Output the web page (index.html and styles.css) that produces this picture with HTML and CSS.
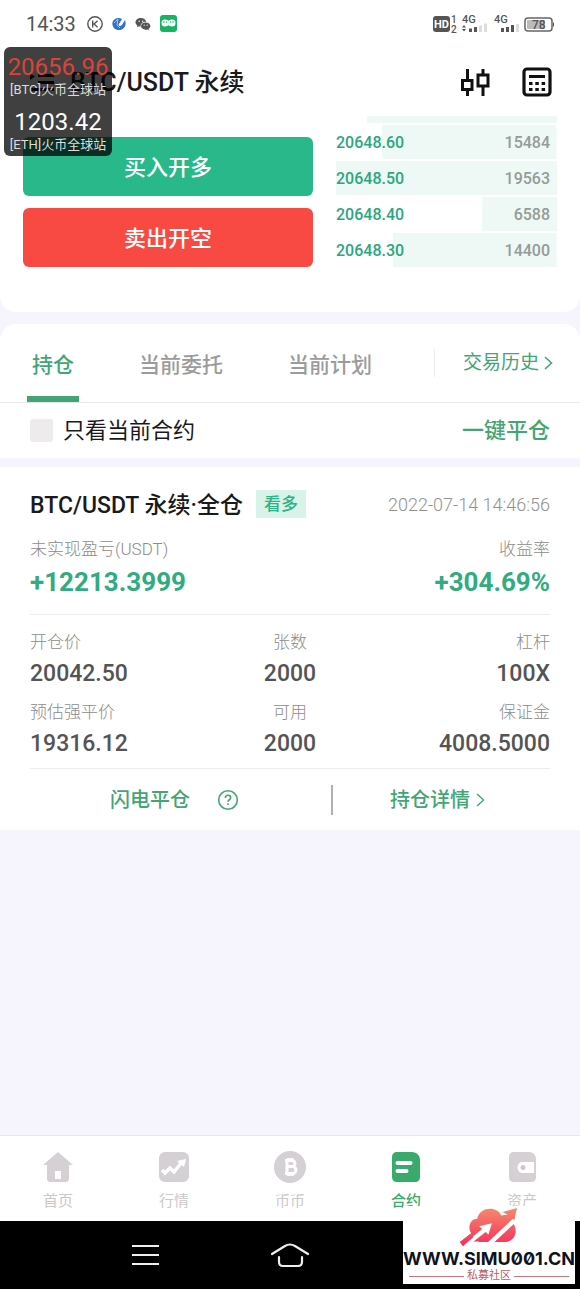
FILE: index.html
```html
<!DOCTYPE html>
<html lang="zh-CN">
<head>
<meta charset="utf-8">
<meta name="viewport" content="width=device-width, initial-scale=1">
<title>BTC/USDT 永续</title>
<link rel="stylesheet" href="styles.css">
</head>
<body>
<div class="statusbar">
  <span class="clock">14:33</span>
  <svg class="status-icon" width="16" height="16" viewBox="0 0 16 16" fill="none" stroke="#555" stroke-width="1.4"><circle cx="8" cy="8" r="7.2"/><path d="M5.7 4.5v7M10.6 4.8 7 8l3.6 3.2"/></svg>
  <svg class="status-icon" width="14" height="14" viewBox="0 0 14 14"><path d="M1 4c2-3 6-4 9-2L7 7c-1 2 1 3 3 1l3-5c2 5-1 10-6 10S-1 8 1 4z" fill="#2f6fd0"/><path d="M2 6l4-4-1 6 3 3" stroke="#9cc4f4" fill="none"/></svg>
  <svg class="status-icon" width="16" height="14" viewBox="0 0 16 14" fill="#555"><path d="M6 1C2.700 1 .5 3 .5 5.300c0 1.300.7 2.400 1.800 3.200L2 10.200l1.900-1c.6.2 1.200.3 1.800.3C5.300 6.500 8 4.600 11.200 4.700 10.700 2.500 8.600 1 6 1z"/><path d="M10.700 5.400c-2.700 0-4.700 1.700-4.700 3.700s2 3.600 4.700 3.600c.6 0 1.100-.1 1.600-.2l1.600.9-.4-1.500c1.200-.7 1.900-1.700 1.900-2.800 0-2-2-3.700-4.700-3.700z"/><g fill="#fff"><circle cx="4.200" cy="4.200" r=".7"/><circle cx="7.700" cy="4.200" r=".7"/><circle cx="9.200" cy="8.200" r=".6"/><circle cx="12.200" cy="8.200" r=".6"/></g></svg>
  <svg class="status-icon" width="17" height="17" viewBox="0 0 17 17"><rect width="17" height="17" rx="3" fill="#16b364"/><path d="M5 4.500c1.500 0 2.500.7 3.500 1.200 1-.5 2-1.200 3.500-1.200a3.500 3.500 0 0 1 0 7c-1.500 0-2.500-.7-3.500-1.200-1 .5-2 1.200-3.500 1.200a3.500 3.500 0 0 1 0-7z" fill="#fff"/><g fill="#16b364"><circle cx="4" cy="7" r=".8"/><circle cx="6.500" cy="7" r=".8"/><circle cx="10.500" cy="7" r=".8"/><circle cx="13" cy="7" r=".8"/></g></svg>
  <svg class="status-right" width="121" height="20" viewBox="0 0 121 20" font-family="Roboto, sans-serif" fill="#555">
    <rect x="0" y="2" width="17" height="16" rx="3"/>
    <text x="1" y="14" font-size="11" font-weight="700" fill="#fff">HD</text>
    <text x="18" y="9" font-size="10" font-weight="500">1</text>
    <text x="18" y="19" font-size="10" font-weight="500">2</text>
    <text x="29" y="9" font-size="11" font-weight="500">4G</text>
    <path d="M29 13.500l2-2.500 2 2.500zM29 15l2 2.500 2-2.500z"/>
    <path d="M36 14.500h3V18h-3zM41 13h3v5h-3z"/>
    <path d="M46 11.500h3V18h-3zM51 9.500h3V18h-3z" fill="#ddd"/>
    <text x="61" y="9" font-size="11" font-weight="500">4G</text>
    <path d="M68 14h3v4h-3zM73 13h3v5h-3zM78 11h3v7h-3z"/>
    <path d="M83 10h3v8h-3z" fill="#ddd"/>
    <rect x="92" y="4" width="27" height="13" rx="3" fill="#fff" stroke="#666" stroke-width="1.500"/>
    <rect x="94" y="6" width="18" height="9" rx="1" fill="#bbb"/>
    <path d="M120 8.500h1v4h-1z"/>
    <text x="99" y="15" font-size="12" font-weight="500">78</text>
  </svg>
</div>

<section class="trade">
  <header class="header">
    <button class="icon-btn" aria-label="菜单"><svg width="24" height="20" viewBox="0 0 24 20" fill="#111"><path d="M0 1l5 3.500L0 8zM8 2h16v3H8zM8 9h16v3H8zM0 16h24v3H0z"/></svg></button>
    <h1 class="title">BTC/USDT 永续</h1>
    <button class="icon-btn" aria-label="K线"><svg width="30" height="30" viewBox="0 0 30 30" fill="none" stroke="#111" stroke-width="3"><path d="M7.500 2v11M7.500 23v6M2.500 13.500h9.500v9H2.500zM23 2v5M23 19v10M18 8h10v11H18z"/></svg></button>
    <button class="icon-btn" aria-label="计算器"><svg width="30" height="30" viewBox="0 0 30 30"><rect x="2" y="2" width="26" height="26" rx="3" fill="none" stroke="#111" stroke-width="3.200"/><path d="M7 8h16v3H7zM7 15h3.500v3H7zM13.300 15h3.500v3h-3.500zM19.600 15h3.500v3h-3.500zM7 21h3.500v3H7zM13.300 21h3.500v3h-3.500zM19.600 21h3.500v3h-3.500z" fill="#111"/></svg></button>
  </header>
  <div class="trade-body">
    <div class="actions">
      <button class="action buy">买入开多</button>
      <button class="action sell">卖出开空</button>
    </div>
    <table class="book">
      <tbody>
        <tr class="level cut" style="--depth:86%"><td colspan="2"></td></tr>
        <tr class="level" style="--depth:79%"><td class="price">20648.60</td><td class="amount">15484</td></tr>
        <tr class="level" style="--depth:100%"><td class="price">20648.50</td><td class="amount">19563</td></tr>
        <tr class="level" style="--depth:34%"><td class="price">20648.40</td><td class="amount">6588</td></tr>
        <tr class="level" style="--depth:74%"><td class="price">20648.30</td><td class="amount">14400</td></tr>
      </tbody>
    </table>
  </div>
</section>

<section class="orders">
  <nav class="tabs">
    <button class="tab active">持仓</button>
    <button class="tab">当前委托</button>
    <button class="tab">当前计划</button>
    <a class="history" href="#history"><span>交易历史</span><svg width="9" height="14" viewBox="0 0 9 14" fill="none" stroke="currentColor" stroke-width="1.600"><path d="M1 1l6.500 6L1 13"/></svg></a>
  </nav>
  <div class="filter">
    <label class="only"><input class="check" type="checkbox">只看当前合约</label>
    <button class="close-all">一键平仓</button>
  </div>
</section>

<article class="position">
  <div class="position-head">
    <h2 class="pair">BTC/USDT 永续·全仓</h2>
    <span class="badge">看多</span>
    <time class="time">2022-07-14 14:46:56</time>
  </div>
  <dl class="stats pnl">
    <div class="stat"><dt>未实现盈亏(USDT)</dt><dd>+12213.3999</dd></div>
    <div class="stat end"><dt>收益率</dt><dd>+304.69%</dd></div>
  </dl>
  <dl class="stats details">
    <div class="stat"><dt>开仓价</dt><dd>20042.50</dd></div>
    <div class="stat mid"><dt>张数</dt><dd>2000</dd></div>
    <div class="stat end"><dt>杠杆</dt><dd>100X</dd></div>
    <div class="stat"><dt>预估强平价</dt><dd>19316.12</dd></div>
    <div class="stat mid"><dt>可用</dt><dd>2000</dd></div>
    <div class="stat end"><dt>保证金</dt><dd>4008.5000</dd></div>
  </dl>
  <div class="position-foot">
    <div class="foot-left">
      <button class="link">闪电平仓</button>
      <button class="icon-btn" aria-label="帮助"><svg width="22" height="22" viewBox="0 0 22 22" fill="none" stroke="#43a574" stroke-width="1.600"><circle cx="11" cy="11" r="9.300"/><path d="M8.300 9c0-1.700 1.200-2.700 2.700-2.700s2.700 1 2.700 2.500c0 1.900-2.700 2-2.700 4M11 14.200v1.900"/></svg></button>
    </div>
    <a class="link foot-right" href="#detail">持仓详情<svg width="9" height="14" viewBox="0 0 9 14" fill="none" stroke="currentColor" stroke-width="1.400"><path d="M1 1l6.500 6L1 13"/></svg></a>
  </div>
</article>

<footer class="bottom">
  <nav class="tabbar">
    <a class="tabitem" href="#home"><svg width="32" height="32" viewBox="0 0 32 32"><path d="M16 1L1 14h4v13c0 3 1 4 4 4h14c3 0 4-1 4-4V14h4z" fill="#d5d0d3"/><path d="M13 20h6v8h-6z" fill="#fff"/></svg>首页</a>
    <a class="tabitem" href="#market"><svg width="32" height="32" viewBox="0 0 32 32"><rect x="1" y="1" width="30" height="30" rx="6" fill="#d5d0d3"/><path d="M4 19l3 3 5-5 4 4 8-10" fill="none" stroke="#fff" stroke-width="3.500"/><path d="M19 10l9-2-2 8z" fill="#fff"/></svg>行情</a>
    <a class="tabitem" href="#spot"><svg width="32" height="32" viewBox="0 0 32 32"><circle cx="16" cy="16" r="16" fill="#d5d0d3"/><path d="M13 9v14M11 9.500h6.500c4.500 0 4.500 6 0 6H13h5.500c4.500 0 4.500 7 0 7H11M14.500 7v3M18 7v3M14.500 22v3M18 22v3" fill="none" stroke="#fff" stroke-width="3"/></svg>币币</a>
    <a class="tabitem current" href="#contract"><svg width="32" height="32" viewBox="0 0 32 32"><path d="M7 1h15c5 0 8 4 8 8v17c0 3-2 5-5 5H7c-3 0-5-2-5-5V6c0-3 2-5 5-5z" fill="#3aaa6c"/><path d="M7.500 12h13M7.500 20h9" stroke="#fff" stroke-width="4" stroke-linecap="round"/></svg>合约</a>
    <a class="tabitem" href="#assets"><svg width="32" height="32" viewBox="0 0 32 32"><path d="M8 1h15c5 0 7 4 7 8v17c0 3-2 5-5 5H8c-3 0-5-2-5-5V6c0-3 2-5 5-5z" fill="#d5d0d3"/><path d="M16 11h12v11H16c-6 0-6-11 0-11z" fill="#fff"/><circle cx="17" cy="16.500" r="2.500" fill="#cdc8cb"/></svg>资产</a>
  </nav>
  <div class="sysnav">
    <button class="icon-btn" aria-label="最近任务"><svg width="30" height="24" viewBox="0 0 30 24" stroke="#eee" stroke-width="2.200"><path d="M2 3h27M2 12h27M2 21h27"/></svg></button>
    <button class="icon-btn" aria-label="主屏幕"><svg width="40" height="26" viewBox="0 0 40 26" fill="none" stroke="#eee" stroke-width="2.200" stroke-linecap="round" stroke-linejoin="round"><path d="M2 12L15 4q5-3 10 0l13 8M9 15v5q0 4 4 4h15q4 0 4-4v-5"/></svg></button>
  </div>
  <div class="watermark">
    <svg width="58" height="40" viewBox="30 15 175 120"><defs><linearGradient id="cloud" gradientUnits="userSpaceOnUse" x1="0" y1="18" x2="0" y2="132"><stop offset="0" stop-color="#f58a6c"/><stop offset="1" stop-color="#f4305c"/></linearGradient></defs><path d="M39 132l-9-12 34-26c-12-16-4-44 18-44 8-38 62-38 72-10l20-3-16-7 44-12-10 44-6-8 8 16c12 24-4 50-28 50H66z" fill="url(#cloud)"/><path d="M44 132l64-51M116 128l78-73" stroke="#fff" stroke-width="13"/><path d="M88 73l38-9-10 34z" fill="#fff"/><path d="M42 128h52l-8-9H56z" fill="#fff"/><path d="M39 132l-9-12 34-26 6 13z" fill="url(#cloud)"/></svg>
    <span class="site">WWW.SIMU001.CN</span>
    <span class="club">私募社区</span>
  </div>
</footer>

<aside class="ticker">
  <span class="quote down">20656.96</span>
  <span class="source">[BTC]火币全球站</span>
  <span class="quote">1203.42</span>
  <span class="source">[ETH]火币全球站</span>
</aside>
</body>
</html>
```

FILE: styles.css
```css
* { box-sizing: border-box; }

body {
  margin: 0;
  min-height: 100vh;
  display: flex;
  flex-direction: column;
  position: relative;
  background: #f6f5fe;
  color: #1a1a1c;
  font-family: Roboto, "Noto Sans CJK SC", sans-serif;
}

button {
  border: 0;
  padding: 0;
  background: none;
  color: inherit;
  font: inherit;
}

a { color: inherit; text-decoration: none; }
h1, h2, dl, dd { margin: 0; }
svg { display: block; flex: none; }

.statusbar {
  display: flex;
  align-items: center;
  gap: 9px;
  height: 47px;
  padding: 0 26px;
  background: #fff;
}
.clock { font-size: 20px; color: #555; margin-right: 2px; }
.status-right { margin-left: auto; }

.trade {
  background: #fff;
  border-radius: 0 0 16px 16px;
  padding-bottom: 45px;
}
.header {
  display: flex;
  align-items: center;
  height: 69px;
  gap: 32px;
  padding: 0 28px 0 30px;
}
.title {
  flex: 1;
  margin-left: -16px;
  padding-bottom: 4px;
  font-size: 25px;
  font-weight: 500;
}
.trade-body {
  display: flex;
  gap: 23px;
  padding: 0 23px;
}
.actions {
  flex: 290;
  display: flex;
  flex-direction: column;
  gap: 12px;
  padding-top: 21px;
}
.action {
  height: 59px;
  padding-bottom: 4px;
  border-radius: 6px;
  color: #fff;
  font-size: 22px;
  font-weight: 500;
}
.buy { background: #28b88a; }
.sell { background: #f84a43; }

.book { flex: 221; display: block; font-size: 16px; font-weight: 500; }
.book tbody { display: flex; flex-direction: column; gap: 2px; }
.level {
  display: flex;
  justify-content: space-between;
  align-items: center;
  height: 34px;
  padding-right: 7px;
  background: linear-gradient(#eef9f5, #eef9f5) right / var(--depth) 100% no-repeat;
}
.cut { height: 7px; }
.level td { padding: 0; }
.price { color: #2ba67f; }
.amount { color: #959b99; }

.orders {
  margin-top: 12px;
  background: #fff;
  border-radius: 16px 16px 0 0;
}
.tabs {
  display: flex;
  align-items: stretch;
  height: 79px;
  padding: 0 27px;
  border-bottom: 1px solid #e8e8ea;
}
.tab {
  margin-right: 55px;
  padding: 5px 5px 0;
  border-bottom: 6px solid transparent;
  font-size: 21px;
  font-weight: 500;
  color: #9b9b9b;
}
.active { color: #43a574; border-color: #43a574; }
.history {
  display: flex;
  align-items: center;
  gap: 5px;
  align-self: center;
  margin-left: auto;
  padding-left: 28px;
  border-left: 1px solid #eee;
  font-size: 19px;
  line-height: 28px;
  color: #43a574;
}
.filter {
  display: flex;
  align-items: center;
  justify-content: space-between;
  height: 55px;
  padding: 0 30px;
  font-size: 22px;
  line-height: 30px;
}
.only { display: flex; align-items: center; gap: 10px; }
.check {
  appearance: none;
  width: 23px;
  height: 23px;
  margin: 0;
  border-radius: 3px;
  background: #eeebec;
}
.close-all { color: #43a574; font-weight: 500; }

.position {
  margin-top: 9px;
  padding: 0 30px;
  background: #fff;
}
.position-head {
  display: flex;
  align-items: center;
  gap: 13px;
  height: 68px;
  padding-top: 6px;
}
.pair {
  padding-bottom: 2px;
  font-size: 23px;
  font-weight: 500;
  white-space: nowrap;
}
.badge {
  padding: 0 8px;
  background: #d9f3e8;
  color: #2bb487;
  font-size: 17px;
  font-weight: 500;
  line-height: 28px;
}
.time { margin-left: auto; font-size: 18px; font-weight: 300; color: #929292; }

.stats { display: grid; border-bottom: 1px solid #eee; }
.stat dt { font-size: 17px; font-weight: 300; line-height: 28px; color: #8c8c8c; }
.pnl { grid-template-columns: 1fr 1fr; height: 80px; }
.pnl dd { font-size: 26px; font-weight: 700; line-height: 38px; color: #32ab80; }
.details {
  grid-template-columns: 1fr 1fr 1fr;
  gap: 7px 0;
  padding: 13px 0 7px;
}
.details dd { font-size: 23px; font-weight: 500; line-height: 35px; color: #545456; }
.mid { text-align: center; }
.end { text-align: right; }

.position-foot {
  display: grid;
  grid-template-columns: 303fr 217fr;
  align-items: center;
  height: 61px;
}
.foot-left {
  display: flex;
  align-items: center;
  justify-content: flex-end;
  gap: 27px;
  height: 30px;
  padding-right: 92px;
  border-right: 2px solid #b0b0b0;
}
.link { font-size: 20px; font-weight: 500; line-height: 28px; color: #43a574; }
.foot-right {
  display: flex;
  align-items: center;
  gap: 6px;
  padding-left: 57px;
}

.bottom { position: relative; margin-top: auto; }
.tabbar {
  display: grid;
  grid-template-columns: repeat(5, 1fr);
  height: 86px;
  border-top: 1px solid #e8e8ea;
  background: #fff;
}
.tabitem {
  display: flex;
  flex-direction: column;
  align-items: center;
  padding-top: 15px;
  gap: 6px;
  font-size: 15px;
  line-height: 24px;
  color: #cbc8ca;
}
.current { color: #3aaa6c; font-weight: 500; }
.sysnav {
  display: flex;
  align-items: center;
  justify-content: center;
  gap: 110px;
  height: 68px;
  padding-right: 140px;
  background: #000;
}

.watermark {
  position: absolute;
  right: 5px;
  bottom: 5px;
  display: flex;
  flex-direction: column;
  align-items: center;
  width: 172px;
  height: 78px;
  background: #fff;
}
.watermark svg { margin-top: 1px; }
.site {
  font-family: Inter, sans-serif;
  font-size: 18px;
  font-weight: 700;
  font-feature-settings: "zero";
  line-height: 24px;
  color: #10121e;
}
.club {
  display: flex;
  align-items: center;
  gap: 3px;
  width: 160px;
  font-size: 11px;
  line-height: 10px;
  color: #bd5c66;
}
.club::before, .club::after { content: ""; flex: 1; height: 1px; background: #c9757d; }

.ticker {
  position: absolute;
  left: 4px;
  top: 47px;
  display: flex;
  flex-direction: column;
  align-items: center;
  width: 108px;
  height: 109px;
  padding-top: 5px;
  border-radius: 6px;
  background: rgba(0, 0, 0, 0.75);
  color: #fff;
}
.quote { font-size: 24px; line-height: 30px; }
.down { color: #d9443a; }
.source { font-size: 13px; line-height: 16px; margin-bottom: 9px; color: #ddd; white-space: nowrap; }
```
